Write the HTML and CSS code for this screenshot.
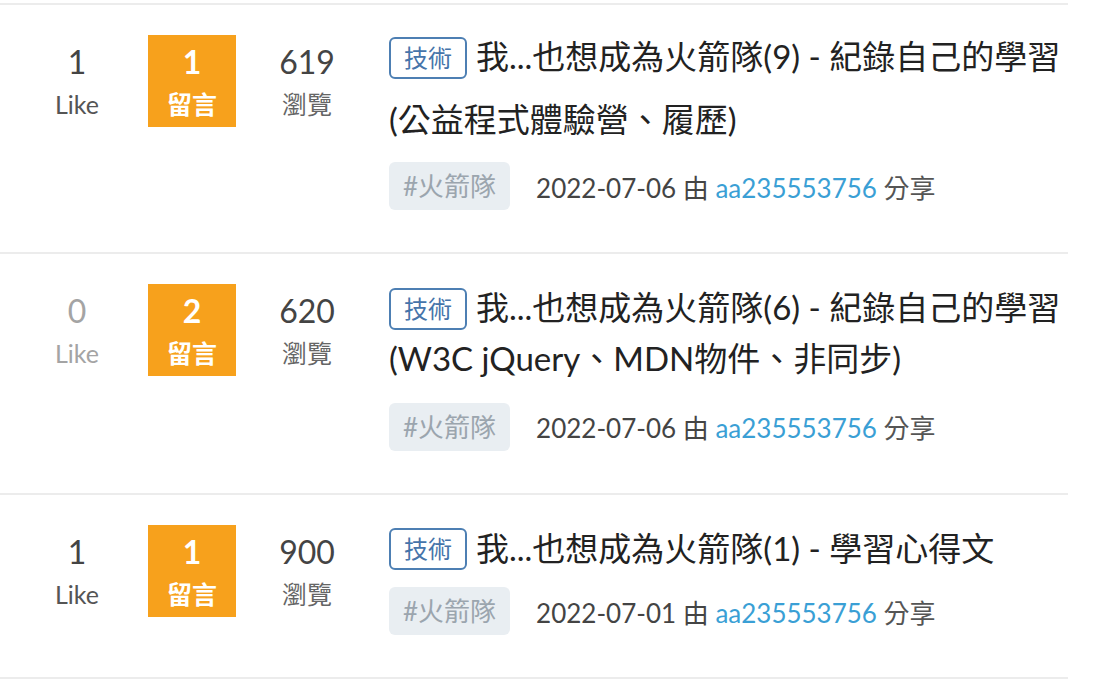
FILE: index.html
```html
<!DOCTYPE html>
<html lang="zh-Hant">
<head>
<meta charset="utf-8">
<title>文章列表</title>
<link rel="stylesheet" href="styles.css">
</head>
<body>
<ul class="post-list">
  <li class="post">
    <div class="stat">
      <span class="stat-num">1</span>
      <span class="stat-label">Like</span>
    </div>
    <div class="stat stat--reply">
      <span class="stat-num">1</span>
      <span class="stat-label">留言</span>
    </div>
    <div class="stat stat--view">
      <span class="stat-num">619</span>
      <span class="stat-label">瀏覽</span>
    </div>
    <div class="post-main">
      <h3 class="post-title post-title--loose"><span class="type-tag">技術</span><span class="title-text">我...也想成為火箭隊(9) - 紀錄自己的學習 (公益程式體驗營、履歷)</span></h3>
      <div class="post-meta">
        <span class="topic-tag">#火箭隊</span>
        <span class="meta-text">2022-07-06 由 <a class="author" href="#">aa235553756</a> <span class="share">分享</span></span>
      </div>
    </div>
  </li>
  <li class="post">
    <div class="stat stat--zero">
      <span class="stat-num">0</span>
      <span class="stat-label">Like</span>
    </div>
    <div class="stat stat--reply">
      <span class="stat-num">2</span>
      <span class="stat-label">留言</span>
    </div>
    <div class="stat stat--view">
      <span class="stat-num">620</span>
      <span class="stat-label">瀏覽</span>
    </div>
    <div class="post-main">
      <h3 class="post-title"><span class="type-tag">技術</span><span class="title-text">我...也想成為火箭隊(6) - 紀錄自己的學習 (W3C jQuery、MDN物件、非同步)</span></h3>
      <div class="post-meta post-meta--wide">
        <span class="topic-tag">#火箭隊</span>
        <span class="meta-text">2022-07-06 由 <a class="author" href="#">aa235553756</a> <span class="share">分享</span></span>
      </div>
    </div>
  </li>
  <li class="post">
    <div class="stat">
      <span class="stat-num">1</span>
      <span class="stat-label">Like</span>
    </div>
    <div class="stat stat--reply">
      <span class="stat-num">1</span>
      <span class="stat-label">留言</span>
    </div>
    <div class="stat stat--view">
      <span class="stat-num">900</span>
      <span class="stat-label">瀏覽</span>
    </div>
    <div class="post-main">
      <h3 class="post-title"><span class="type-tag">技術</span><span class="title-text">我...也想成為火箭隊(1) - 學習心得文</span></h3>
      <div class="post-meta">
        <span class="topic-tag">#火箭隊</span>
        <span class="meta-text">2022-07-01 由 <a class="author" href="#">aa235553756</a> <span class="share">分享</span></span>
      </div>
    </div>
  </li>
</ul>
</body>
</html>
```
FILE: styles.css
```css
* { box-sizing: border-box; }

html, body {
  margin: 0;
  padding: 0;
  background: #ffffff;
}

body {
  font-family: "Lato", "Noto Sans CJK TC", sans-serif;
  color: #333;
}

.post-list {
  list-style: none;
  margin: 0;
  padding: 3px 0 0 0;
  width: 1068px;
}

.post {
  display: flex;
  align-items: flex-start;
  padding: 29px 0 42px 33px;
  border-bottom: 2px solid #ececec;
}

.post:first-child {
  border-top: 2px solid #ececec;
}

.stat {
  flex: none;
  width: 88px;
  height: 92px;
  margin-top: 1px;
  margin-right: 27px;
  padding-top: 11px;
  display: flex;
  flex-direction: column;
  align-items: center;
  gap: 10px;
  color: #444;
}

.stat-num {
  font-size: 32px;
  line-height: 32px;
}

.stat-label {
  font-size: 25px;
  line-height: 32px;
  color: #555;
}

.stat--zero .stat-num,
.stat--zero .stat-label {
  color: #a4a4a4;
}

.stat--reply {
  background: #f7a11c;
  color: #fff;
}

.stat--reply .stat-num {
  font-weight: 700;
}

.stat--reply .stat-label {
  color: #fff;
  font-weight: 700;
}

.stat--view .stat-label {
  color: #666;
}

.stat--view {
  margin-right: 38px;
}

.post-main {
  flex: 1;
  min-width: 0;
  margin-right: -20px;
}

.post-title {
  margin: -1px 0 0 0;
  font-size: 33px;
  line-height: 50px;
  font-weight: 400;
  color: #222;
}

.post-title--loose {
  line-height: 63px;
  margin-top: -9px;
  margin-bottom: -3px;
}

.type-tag {
  display: inline-block;
  vertical-align: middle;
  position: relative;
  top: -3px;
  height: 42px;
  line-height: 38px;
  padding: 0 13px;
  margin-right: 9px;
  border: 2px solid #4d7fb3;
  border-radius: 6px;
  font-size: 24px;
  color: #4574aa;
}

.post-meta {
  display: flex;
  align-items: center;
  gap: 26px;
  margin-top: 14px;
}

.post-meta--wide {
  margin-top: 20px;
}

.topic-tag {
  display: inline-block;
  height: 48px;
  line-height: 48px;
  padding: 0 14px;
  border-radius: 6px;
  background: #e9eef2;
  color: #9ba5ae;
  font-size: 26px;
}

.meta-text {
  font-size: 26px;
  color: #444;
}

.author {
  color: #3a9fd5;
  text-decoration: none;
}

.share {
  color: #555;
}
```
